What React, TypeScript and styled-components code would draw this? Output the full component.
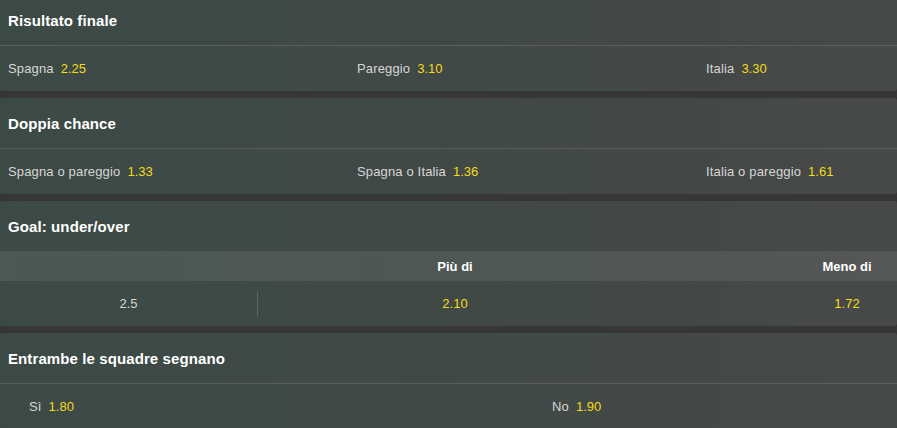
import React from "react";
import styled, { createGlobalStyle } from "styled-components";

const GlobalStyle = createGlobalStyle`
  body {
    margin: 0;
    background: #363636;
    overflow: hidden;
    font-family: "Liberation Sans", Arial, sans-serif;
  }
`;

const Page = styled.div`
  margin-top: -5px;
  display: flex;
  flex-direction: column;
  gap: 7px;
`;

const Market = styled.section`
  background: linear-gradient(90deg, #3c4a46 0%, #434846 75%, #474948 100%);
  border-radius: 3px;
  overflow: hidden;
`;

const MarketHeader = styled.h2`
  margin: 0;
  height: 50px;
  padding: 0 8px;
  display: flex;
  align-items: center;
  font-size: 15px;
  font-weight: 700;
  color: #ffffff;
  letter-spacing: 0.1px;
`;

const OddsRow = styled.div<{ $cols: string; $pad: number }>`
  display: grid;
  grid-template-columns: ${(p) => p.$cols};
  align-items: center;
  height: 45px;
  padding-left: ${(p) => p.$pad}px;
  border-top: 1px solid rgba(255, 255, 255, 0.13);
`;

const Participant = styled.div`
  display: flex;
  align-items: center;
  gap: 7px;
  font-size: 13px;
`;

const Label = styled.span`
  color: #d6d6d6;
  letter-spacing: 0.15px;
`;

const Odds = styled.span`
  color: #f4dc1a;
`;

// under/over table: line | over | under (the last column runs past the frame in the original)
const ColumnHeader = styled.div`
  display: grid;
  grid-template-columns: 258px 394px 1fr;
  align-items: center;
  height: 30px;
  background: rgba(255, 255, 255, 0.08);
  font-size: 13px;
  font-weight: 700;
  color: #ffffff;
  text-align: center;
`;

const LineRow = styled.div`
  display: grid;
  grid-template-columns: 258px 394px 1fr;
  align-items: center;
  height: 45px;
  font-size: 13px;
  text-align: center;
`;

const HeadCell = styled.div<{ $offset?: number }>`
  padding-left: ${(p) => p.$offset ?? 0}px;
`;

const LineCell = styled.div`
  height: 24px;
  line-height: 24px;
  color: #d6d6d6;
  border-right: 1px solid rgba(255, 255, 255, 0.16);
`;

const PriceCell = styled.div<{ $offset?: number }>`
  color: #f4dc1a;
  padding-left: ${(p) => p.$offset ?? 0}px;
`;

type Pick = { label: string; odds: string };

const risultato: Pick[] = [
  { label: "Spagna", odds: "2.25" },
  { label: "Pareggio", odds: "3.10" },
  { label: "Italia", odds: "3.30" },
];

const doppia: Pick[] = [
  { label: "Spagna o pareggio", odds: "1.33" },
  { label: "Spagna o Italia", odds: "1.36" },
  { label: "Italia o pareggio", odds: "1.61" },
];

const entrambe: Pick[] = [
  { label: "Sì", odds: "1.80" },
  { label: "No", odds: "1.90" },
];

function Picks({ items, cols, pad }: { items: Pick[]; cols: string; pad: number }) {
  return (
    <OddsRow $cols={cols} $pad={pad}>
      {items.map((item) => (
        <Participant key={item.label}>
          <Label>{item.label}</Label>
          <Odds>{item.odds}</Odds>
        </Participant>
      ))}
    </OddsRow>
  );
}

export default function App() {
  return (
    <>
      <GlobalStyle />
      <Page>
        <Market>
          <MarketHeader>Risultato finale</MarketHeader>
          <Picks items={risultato} cols="349px 349px 1fr" pad={8} />
        </Market>
        <Market>
          <MarketHeader>Doppia chance</MarketHeader>
          <Picks items={doppia} cols="349px 349px 1fr" pad={8} />
        </Market>
        <Market>
          <MarketHeader>Goal: under/over</MarketHeader>
          <ColumnHeader>
            <div />
            <HeadCell>Più di</HeadCell>
            <HeadCell $offset={145}>Meno di</HeadCell>
          </ColumnHeader>
          <LineRow>
            <LineCell>2.5</LineCell>
            <PriceCell>2.10</PriceCell>
            <PriceCell $offset={145}>1.72</PriceCell>
          </LineRow>
        </Market>
        <Market>
          <MarketHeader>Entrambe le squadre segnano</MarketHeader>
          <Picks items={entrambe} cols="523px 1fr" pad={29} />
        </Market>
      </Page>
    </>
  );
}
